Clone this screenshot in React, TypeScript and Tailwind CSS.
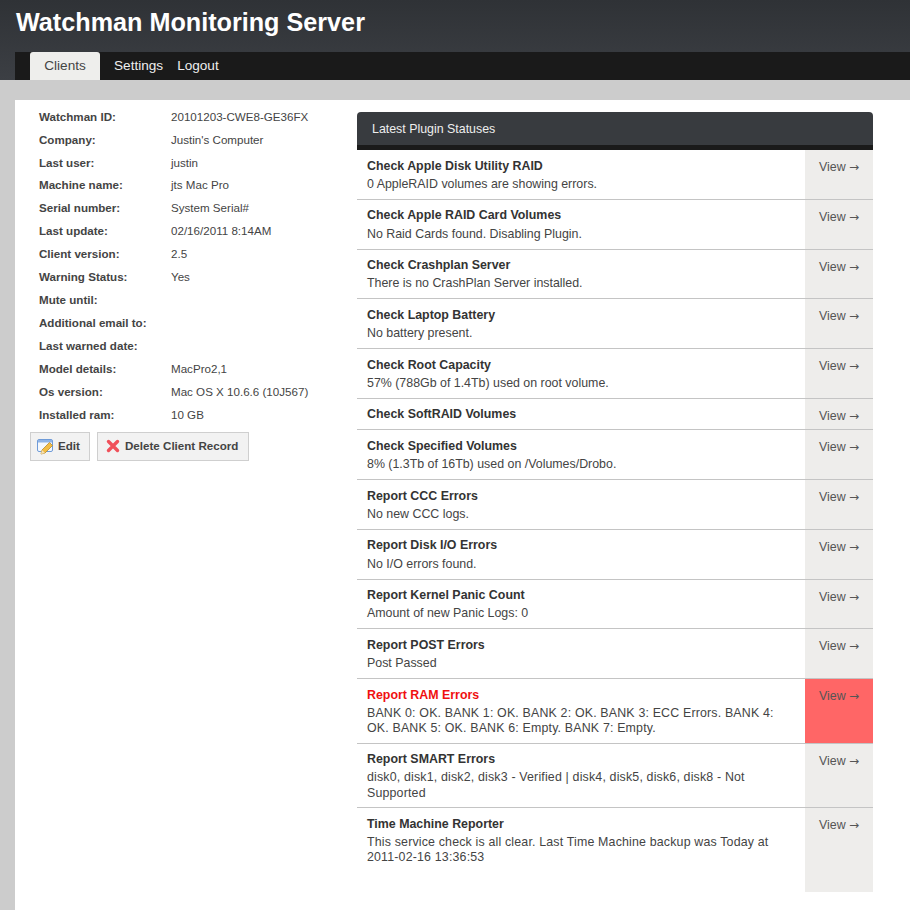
const font = "font-['Liberation_Sans',Arial,sans-serif]";

const details = [
  ["Watchman ID:", "20101203-CWE8-GE36FX"],
  ["Company:", "Justin's Computer"],
  ["Last user:", "justin"],
  ["Machine name:", "jts Mac Pro"],
  ["Serial number:", "System Serial#"],
  ["Last update:", "02/16/2011 8:14AM"],
  ["Client version:", "2.5"],
  ["Warning Status:", "Yes"],
  ["Mute until:", ""],
  ["Additional email to:", ""],
  ["Last warned date:", ""],
  ["Model details:", "MacPro2,1"],
  ["Os version:", "Mac OS X 10.6.6 (10J567)"],
  ["Installed ram:", "10 GB"],
];

const plugins = [
  { name: "Check Apple Disk Utility RAID", text: "0 AppleRAID volumes are showing errors." },
  { name: "Check Apple RAID Card Volumes", text: "No Raid Cards found. Disabling Plugin." },
  { name: "Check Crashplan Server", text: "There is no CrashPlan Server installed." },
  { name: "Check Laptop Battery", text: "No battery present." },
  { name: "Check Root Capacity", text: "57% (788Gb of 1.4Tb) used on root volume." },
  { name: "Check SoftRAID Volumes", text: "" },
  { name: "Check Specified Volumes", text: "8% (1.3Tb of 16Tb) used on /Volumes/Drobo." },
  { name: "Report CCC Errors", text: "No new CCC logs." },
  { name: "Report Disk I/O Errors", text: "No I/O errors found." },
  { name: "Report Kernel Panic Count", text: "Amount of new Panic Logs: 0" },
  { name: "Report POST Errors", text: "Post Passed" },
  {
    name: "Report RAM Errors",
    text: "BANK 0: OK. BANK 1: OK. BANK 2: OK. BANK 3: ECC Errors. BANK 4: OK. BANK 5: OK. BANK 6: Empty. BANK 7: Empty.",
    error: true,
    long: true,
  },
  {
    name: "Report SMART Errors",
    text: "disk0, disk1, disk2, disk3 - Verified | disk4, disk5, disk6, disk8 - Not Supported",
    long: true,
  },
  {
    name: "Time Machine Reporter",
    text: "This service check is all clear. Last Time Machine backup was Today at 2011-02-16 13:36:53",
    long: true,
    last: true,
  },
];

function EditIcon() {
  return (
    <svg width="17" height="17" viewBox="0 0 17 17">
      <rect x="0.5" y="1.5" width="15" height="12" rx="1.5" fill="#f4f8fd" stroke="#6f9bd8" />
      <rect x="1" y="2" width="14" height="2.5" fill="#8fb4e6" />
      <path d="M4 16l1-4 7.5-7.5 3 3-7.5 7.5z" fill="#f2bd45" stroke="#b98a2a" strokeWidth="0.8" />
      <path d="M4 16l1-4 3 3z" fill="#f5e2b8" />
    </svg>
  );
}

function DeleteIcon() {
  return (
    <svg width="14" height="14" viewBox="0 0 14 14">
      <path d="M2.5 2.5l9 9M11.5 2.5l-9 9" stroke="#f0505a" strokeWidth="3.4" strokeLinecap="round" />
    </svg>
  );
}

export default function App() {
  return (
    <div className={`${font} h-[910px] w-[910px] overflow-hidden bg-[#cccccc] text-[#333333]`}>
      <header className="h-20 bg-gradient-to-b from-[#2f3236] to-[#3c3f44] pl-[15px]">
        <h1 className="h-[52px] pl-px pt-[5px] text-[25.2px] leading-[34px] font-bold text-white">
          Watchman Monitoring Server
        </h1>
        <nav className="flex h-7 items-stretch bg-[#1a1a1a] pl-[15px] text-[13.6px]">
          <a className="flex w-[70px] items-center justify-center rounded-t-[3px] bg-[#eeeeec] text-[#444444]">
            Clients
          </a>
          <a className="ml-[14px] flex items-center text-[#eeeeee]">Settings</a>
          <a className="ml-[14px] flex items-center text-[#eeeeee]">Logout</a>
        </nav>
      </header>

      <main className="mt-5 ml-[15px] flex h-[810px] bg-white pt-3">
        <section className="-mt-[7px] w-[342px] shrink-0 text-[11.6px]">
          <dl className="pl-6">
            {details.map(([label, value]) => (
              <div key={label} className="flex h-[22.92px] items-center">
                <dt className="w-[132px] shrink-0 font-bold text-[#444444]">{label}</dt>
                <dd className="text-[#444444]">{value}</dd>
              </div>
            ))}
          </dl>
          <div className="mt-[6px] ml-[15px] flex gap-[7px]">
            <button className="flex h-[29px] w-[60px] items-center gap-1 border border-[#cfcfcf] bg-[#f2f2f2] pl-[6px] font-bold text-[#444444]">
              <EditIcon />
              Edit
            </button>
            <button className="flex h-[29px] w-[152px] items-center gap-[5px] border border-[#cfcfcf] bg-[#f2f2f2] pl-2 font-bold text-[#444444]">
              <DeleteIcon />
              Delete Client Record
            </button>
          </div>
        </section>

        <section className="w-[516px] shrink-0">
          <h2 className="flex h-[38px] items-start rounded-t-[4px] border-b-[5px] border-[#1a1a1a] bg-[#383b3f] pt-[9px] pl-[15px] text-[12.4px] leading-[16px] font-normal text-[#eeeeee]">
            Latest Plugin Statuses
          </h2>
          {plugins.map((p) => (
            <div key={p.name} className="flex border-b border-[#c4c4c4] last:border-b-0">
              <div className={`min-w-0 flex-1 pt-[8.5px] pr-6 pl-[10px] ${p.last ? "pb-[26.25px]" : "pb-[6.5px]"}`}>
                <div className={`text-[12.4px] leading-[15.5px] font-bold ${p.error ? "text-[#f01010]" : "text-[#333333]"}`}>
                  {p.name}
                </div>
                {p.text && (
                  <p
                    className={`mt-[2.75px] text-[12.4px] text-[#444444] ${
                      p.long ? "leading-[15.2px] tracking-[0.17px]" : "leading-[15.5px]"
                    }`}
                  >
                    {p.text}
                  </p>
                )}
              </div>
              <div className={`w-[68px] shrink-0 pt-2 pl-[14px] text-[12.4px] leading-[18px] text-[#555555] ${p.error ? "bg-[#ff6666]" : "bg-[#eeedeb]"}`}>
                View <span className="font-['DejaVu_Sans',sans-serif] text-[12px]">→</span>
              </div>
            </div>
          ))}
        </section>
      </main>
    </div>
  );
}
